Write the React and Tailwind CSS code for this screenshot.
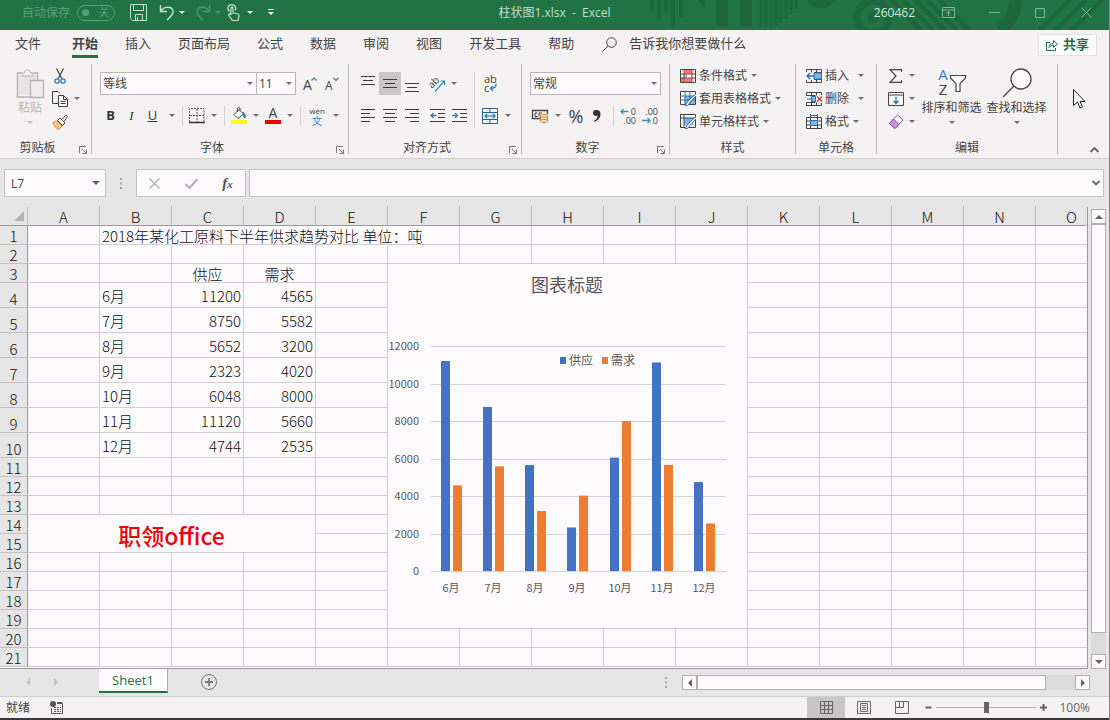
import React, { useState } from 'react';
import clsx from 'clsx';

const columns = 'ABCDEFGHIJKLMNO'.split('');

const monthly = [
  { month: '6月', supply: 11200, demand: 4565 },
  { month: '7月', supply: 8750, demand: 5582 },
  { month: '8月', supply: 5652, demand: 3200 },
  { month: '9月', supply: 2323, demand: 4020 },
  { month: '10月', supply: 6048, demand: 8000 },
  { month: '11月', supply: 11120, demand: 5660 },
  { month: '12月', supply: 4744, demand: 2535 }
];

const ribbonTabs = ['文件', '开始', '插入', '页面布局', '公式', '数据', '审阅', '视图', '开发工具', '帮助'];

/* ---------- icons ---------- */

function Icon({ w = 16, h = 16, className, children }) {
  return (
    <svg width={w} height={h} viewBox={`0 0 ${w} ${h}`} fill="none" stroke="currentColor" className={clsx('shrink-0 overflow-visible', className)} aria-hidden="true">
      {children}
    </svg>
  );
}

function Caret({ className = 'text-[#6f6f6f]' }) {
  return (
    <Icon w={6} h={3} className={className}>
      <path d="M0 0h6L3 3z" fill="currentColor" stroke="none" />
    </Icon>
  );
}

const PasteIcon = () => (
  <Icon w={28} h={32} className="text-[#b4b2b3]">
    <path d="M6 5H1.500v24H14" strokeWidth="1.500" />
    <path d="M17 5h4.500v7" strokeWidth="1.500" />
    <path d="M3 7h17v6h-6v14H3z" fill="#e6e4e5" stroke="none" />
    <path d="M6 8V5h2.500c0-4 6-4 6 0H17v3z" fill="#f5f2f3" />
    <path d="M14.500 12.500h13v17h-13z" fill="#efedee" strokeWidth="1.300" />
  </Icon>
);

const CutIcon = () => (
  <Icon w={12} h={16}>
    <path d="M2.500 0.500 8 11M9.500 0.500 4 11" stroke="#444" strokeWidth="1.200" />
    <circle cx="3" cy="13" r="2.200" stroke="#2f80c0" strokeWidth="1.300" />
    <circle cx="9" cy="13" r="2.200" stroke="#2f80c0" strokeWidth="1.300" />
  </Icon>
);

const CopyIcon = () => (
  <Icon className="text-[#3c3c3c]">
    <path d="M6 12.500H0.500v-12H6l2 2" />
    <path d="M6.500 4.500h5l4 4v7h-9z" fill="#fff" />
    <path d="M11.500 4.500v4h4M8.500 10.500h5M8.500 12.500h5" />
  </Icon>
);

const PainterIcon = () => (
  <Icon>
    <path d="M1 8.500 5 7l5 5-3 3.500c-2-.5-5-3-6-7z" fill="#fbd9b8" stroke="#e07b28" />
    <path d="M4 11l2-1M5.500 13l2-1.500" stroke="#e07b28" />
    <path d="M5.500 6.500 8 4l5 5-2.500 2.500z" fill="#fff" stroke="#444" />
    <path d="M10 5.500 14 1l1.500 1.500L12 7.500" fill="#fff" stroke="#444" />
  </Icon>
);

const Launcher = () => (
  <Icon w={8} h={8} className="text-[#777]">
    <path d="M7 0.500H0.500V7M3 3l4 4M7.500 3.500v4h-4" />
  </Icon>
);

const BordersIcon = () => (
  <Icon className="text-[#555]">
    <path d="M0.500 14V0.500h14.500V14M8 1v13M1 7.500h14" strokeDasharray="2 1" />
    <path d="M0 14.500h16" stroke="#333" strokeWidth="1.500" />
  </Icon>
);

const FillIcon = () => (
  <Icon w={16} h={18}>
    <path d="M3 7.500 8 2.500l4.500 4.500L7 11.500z" fill="#fff" stroke="#444" />
    <path d="M6.500 5V1.500c0-1.500 2.500-1.500 2.500 0V4" stroke="#444" />
    <path d="M12 5.500c2 1 2.500 3 2 5.500-1-.5-1.500-3-2-5.500z" fill="#2b6cb0" stroke="#2b6cb0" />
    <path d="M0 13h16v4H0z" fill="#ffff00" stroke="none" />
  </Icon>
);

const FontColorIcon = () => (
  <Icon w={16} h={18}>
    <text x="8" y="11" textAnchor="middle" fontSize="14" fill="#444" stroke="none">A</text>
    <path d="M0 13h16v4H0z" fill="#e60000" stroke="none" />
  </Icon>
);

function FontSizeIcon({ bigger }) {
  return (
    <Icon w={13} h={16}>
      <text x="0" y="14" fontSize={bigger ? 14 : 12} fill="#444" stroke="none">A</text>
      <path d={bigger ? 'M8.500 4.500 11 2l2.500 2.500' : 'M8.500 2 11 4.500 13.500 2'} stroke="#2f7fc4" strokeWidth="1.200" />
    </Icon>
  );
}

const linesFor = {
  top: ['M0 3.500h14', 'M2 7.500h10', 'M0 11.500h14'],
  middle: ['M0 6.500h14', 'M2 10.500h10', 'M0 14.500h14'],
  bottom: ['M0 10.500h14', 'M2 14.500h10', 'M0 18.500h14'],
  left: ['M0 4.500h14', 'M0 8.500h9', 'M0 12.500h14', 'M0 16.500h9'],
  center: ['M0 4.500h14', 'M2 8.500h10', 'M0 12.500h14', 'M2 16.500h10'],
  right: ['M0 4.500h14', 'M5 8.500h9', 'M0 12.500h14', 'M5 16.500h9'],
  indent: ['M0 4.500h15', 'M8 8.500h7', 'M8 12.500h7', 'M0 16.500h15']
};

function Lines({ kind, arrow }) {
  return (
    <Icon w={kind === 'indent' ? 15 : 14} h={22} className="text-[#3c3c3c]">
      {linesFor[kind].map((d) => <path key={d} d={d} />)}
      {arrow === 'out' && <path d="M6.500 10.500H1M3.500 8 1 10.500 3.500 13" stroke="#2f7fc4" strokeWidth="1.300" />}
      {arrow === 'in' && <path d="M0 10.500h5.500M3 8l2.500 2.500L3 13" stroke="#2f7fc4" strokeWidth="1.300" />}
    </Icon>
  );
}

const OrientationIcon = () => (
  <Icon w={18} h={18}>
    <text x="0" y="11" fontSize="10" fill="#444" stroke="none" transform="rotate(-45 5 9)">ab</text>
    <path d="M6 16.500 15.500 6M11.500 6h4v4" stroke="#3a8a9c" strokeWidth="1.200" />
  </Icon>
);

const WrapIcon = () => (
  <Icon w={14} h={18}>
    <text x="1" y="8" fontSize="11" fill="#444" stroke="none">ab</text>
    <text x="1" y="17" fontSize="11" fill="#444" stroke="none">c</text>
    <path d="M13 8.500v1c0 3-2 4-5.500 4M10 11l-2.500 2.500L10 16" stroke="#2f7fc4" strokeWidth="1.300" />
  </Icon>
);

const MergeIcon = () => (
  <Icon>
    <path d="M0.500 0.500h15v15h-15zM0.500 4.500h15M0.500 11.500h15M8 0.500v4M8 11.500v4" stroke="#2b5f94" />
    <path d="M1 5h14v6H1z" fill="#e3f1fb" stroke="none" />
    <path d="M3 8h10M5 6 3 8l2 2M11 6l2 2-2 2" stroke="#2073b8" strokeWidth="1.200" />
  </Icon>
);

const AccountingIcon = () => (
  <Icon w={17} h={14}>
    <path d="M8 9.500H0.500v-8h15V5" stroke="#444" strokeWidth="1.300" />
    <path d="M5.500 4H3v3.500h2.500M7 7.500V4h3" stroke="#444" />
    <path d="M8.500 6.500v5.500c0 2 7 2 7 0V6.500c0-1.500-7-1.500-7 0z" fill="#fde3cc" stroke="#e07b28" />
    <path d="M8.500 7c0 1.500 7 1.500 7 0M8.500 9.500c0 1.500 7 1.500 7 0" stroke="#e07b28" />
  </Icon>
);

function DecimalIcon({ more }) {
  return (
    <Icon w={16} h={18}>
      <text x="16" y="8" textAnchor="end" fontSize="9" fill="#444" stroke="none">{more ? '0' : '.00'}</text>
      <text x="16" y="17" textAnchor="end" fontSize="9" fill="#444" stroke="none">{more ? '.00' : '0'}</text>
      {more
        ? <path d="M8.500 4.500H1M3.500 2 1 4.500 3.500 7" stroke="#3a8fb5" strokeWidth="1.300" />
        : <path d="M0 13.500h8M5.500 11l2.500 2.500L5.500 16" stroke="#3a8fb5" strokeWidth="1.300" />}
    </Icon>
  );
}

const ConditionalIcon = () => (
  <Icon h={14}>
    <path d="M0.500 0.500h15v13h-15z" fill="#fff" stroke="#444" />
    <path d="M4 1h8v4H4zM1 9h6v4H1zM7 9h5v4H7z" fill="#f47c7c" stroke="none" />
    <path d="M4 5h3v4H4z" fill="#7db8e8" stroke="none" />
    <path d="M4 0.500v13M12 0.500v13M4 5h8M4 9h8" stroke="#c03a3a" />
    <path d="M0.500 5H4M0.500 9H4M12 5h3.500M12 9h3.500" stroke="#444" />
  </Icon>
);

const TableFormatIcon = () => (
  <Icon h={15}>
    <path d="M0.500 0.500h15v13h-15z" fill="#fff" stroke="#444" />
    <path d="M5 5h10v8H5z" fill="#78b8ec" stroke="none" />
    <path d="M5 0.500v13M10 0.500v13M0.500 5h15M0.500 9h15" stroke="#31679b" />
    <path d="M15.500 3 8 10l-3 4.500c2 .3 4-.5 4.500-2.500L16 5" fill="#fff" stroke="#31679b" />
  </Icon>
);

const CellStyleIcon = () => (
  <Icon h={15}>
    <path d="M0.500 0.500h15v13h-15z" fill="#fff" stroke="#444" />
    <path d="M4 4h9v7H4z" fill="#78b8ec" stroke="none" />
    <path d="M4 0.500v13M0.500 4h15" stroke="#444" />
    <path d="M15.500 3 8 10l-3 4.500c2 .3 4-.5 4.500-2.500L16 5" fill="#fff" stroke="#31679b" />
  </Icon>
);

const InsertCellsIcon = () => (
  <Icon h={14}>
    <path d="M0.500 3V0.500h15V3M0.500 11v2.500h15V11M5.500 0.500v3M10.500 0.500V13.500M5.500 11v2.500M15.500 3v8M8 3.500h7.500M8 10.500h7.500" stroke="#444" />
    <path d="M8 4h7.500v6H8z" fill="#78b8ec" stroke="#2073b8" />
    <path d="M8 7H1M4 4 1 7l3 3" stroke="#2073b8" strokeWidth="1.300" />
  </Icon>
);

const DeleteCellsIcon = () => (
  <Icon h={14}>
    <path d="M0.500 0.500h15V3M0.500 0.500v3h9M5.500 0.500v3M10.500 0.500v3M0.500 13.500h15V11M0.500 13.500v-3h9M5.500 10.500v3M10.500 10.500v3" stroke="#444" />
    <path d="M1 7h4M5.500 4.500h4v5h-4z" fill="#78b8ec" stroke="#2073b8" />
    <path d="m11 4.500 5 5M16 4.500l-5 5" stroke="#d83b3b" strokeWidth="1.300" />
  </Icon>
);

const FormatCellsIcon = () => (
  <Icon h={15}>
    <path d="M0.500 3.500h15v11h-15z" fill="#fff" stroke="#444" />
    <path d="M4.500 3v11.500M11.500 3v11.500M0.500 7h15M0.500 11h15" stroke="#444" />
    <path d="M4.500 6.500h7v5h-7z" fill="#78b8ec" stroke="#2073b8" />
    <path d="M4 1.500h8M4.500 0v3M11.500 0v3" stroke="#2073b8" />
  </Icon>
);

const SumIcon = () => (
  <Icon w={14} h={14}>
    <path d="M12.500 3V0.700H1L7 7l-6 6.300h11.500V11" stroke="#444" strokeWidth="1.200" />
  </Icon>
);

const FillDownIcon = () => (
  <Icon h={14}>
    <path d="M0.500 0.500h15v13h-15zM0.500 3h15" fill="#fff" stroke="#444" />
    <path d="M8 4.500v7M5.500 9 8 11.500 10.500 9" stroke="#2073b8" strokeWidth="1.300" />
  </Icon>
);

const ClearIcon = () => (
  <Icon h={15}>
    <path d="M9.500 1 15 6l-8 8.500L1.500 9.500z" fill="#fff" stroke="#8a4f9e" />
    <path d="M5.500 5 11 10.500 7 14.500 1.500 9.500z" fill="#c98fd8" stroke="#8a4f9e" />
  </Icon>
);

const SortFilterIcon = () => (
  <Icon w={30} h={28}>
    <text x="6" y="12" textAnchor="middle" fontSize="15" fill="#2f7fc4" stroke="none">A</text>
    <text x="6" y="27" textAnchor="middle" fontSize="15" fill="#444" stroke="none">Z</text>
    <path d="M13.500 7.500h15V10L23 15.500v8h-4v-8L13.500 10z" fill="#fff" stroke="#444" strokeWidth="1.200" />
  </Icon>
);

const FindIcon = () => (
  <Icon w={30} h={30}>
    <circle cx="19" cy="11" r="10" fill="#fdfbfd" stroke="#444" strokeWidth="1.300" />
    <path d="M12 18 1 29" stroke="#444" strokeWidth="1.300" />
  </Icon>
);

/* ---------- title bar ---------- */

function TitlePattern() {
  return (
    <svg className="absolute right-0 top-0" width="460" height="30" viewBox="0 0 460 30" fill="none" stroke="#1d673d" aria-hidden="true">
      <path d="M3 0v12M10 0v20M17 0v12M24 0v27M32 0v17" strokeWidth="4" />
      <path d="M49 0h7v9z" fill="#1d673d" stroke="none" />
      <path d="M67 0h12v27h-6l-6-4zM91 0h12v27H91z" fill="#1d673d" stroke="none" />
      <path d="M112 0v27M117 0v27M122 0v27M127 0v26M132 0v23M137 0v19M142 0v14M147 0v9" strokeWidth="3" />
      <path d="M159 0c3 11 23 11 26 0z" fill="#1d673d" stroke="none" />
      <circle cx="224" cy="17" r="16" strokeWidth="7" />
      <circle cx="224" cy="17" r="6" fill="#1d673d" stroke="none" />
      <path d="M242 0l30 30M254 0l30 30M266 0l30 30M278 0l30 30M290 0l30 30" strokeWidth="5" />
      <path d="M366 0c1 12-5 23-16 30" strokeWidth="13" />
      <path d="M391 30l30-30M407 30l30-30M423 30l30-30" strokeWidth="5" />
    </svg>
  );
}

function TitleBar() {
  const [autoSave, setAutoSave] = useState(false);
  return (
    <header className="relative grid h-[30px] shrink-0 grid-cols-[1fr_auto_1fr] items-center bg-[#217346] pb-[5px] text-xs text-[#bfe0cc]">
      <TitlePattern />
      <div className="relative flex items-center pl-[22px]">
        <label className="flex items-center gap-[7px] text-[#5c9d79]">
          自动保存
          <input type="checkbox" checked={autoSave} onChange={(e) => setAutoSave(e.target.checked)} className="sr-only" />
          <span className="flex h-4 w-[38px] items-center justify-between rounded-full border border-[#5c9d79] pl-1 pr-[5px] text-[10px]">
            <span className="size-[7px] rounded-full bg-[#5c9d79]" />
            {autoSave ? '开' : '关'}
          </span>
        </label>
        <button type="button" aria-label="保存" className="ml-[15px]">
          <Icon w={17} h={17}>
            <path d="M0.500 0.500h16v16h-14l-2-2zM3.500 0.500v6h10v-6M5.500 16.500v-6h7v6M7.500 13v3" />
          </Icon>
        </button>
        <button type="button" aria-label="撤消" className="ml-[12px] flex items-center gap-1">
          <Icon w={16} h={17}>
            <path d="M1.500 1v6.500H8M1.500 7.500C5 2 13 2 14 7c.6 3.500-2 5-6 9" strokeWidth="1.400" />
          </Icon>
          <Caret className="text-white" />
        </button>
        <button type="button" aria-label="恢复" className="ml-[10px] flex items-center gap-1 text-[#4f9470]">
          <Icon w={16} h={17}>
            <path d="M14.500 1v6.500H8M14.500 7.500C11 2 3 2 2 7c-.6 3.500 2 5 6 9" strokeWidth="1.400" />
          </Icon>
          <Caret className="text-[#4f9470]" />
        </button>
        <button type="button" aria-label="触摸/鼠标模式" className="ml-[6px] flex items-center gap-[7px]">
          <Icon w={13} h={17}>
            <path d="M3 7.500C-1 5 1 .7 4.500 .7S10 4 8 6.500" strokeWidth="1.200" />
            <path d="M4 11V4c0-1.500 2-1.500 2 0v5l5 1c1 .3 1 1 1 2l-1 4.500H5.500L1.500 11c0-1.500 1.500-1.300 2.500 0" strokeWidth="1.200" />
          </Icon>
          <Caret className="text-white" />
        </button>
        <button type="button" aria-label="自定义快速访问工具栏" className="ml-[15px]">
          <Icon w={6} h={7} className="text-white">
            <path d="M0 0.500h6" />
            <path d="M0 3h6L3 6z" fill="currentColor" stroke="none" />
          </Icon>
        </button>
      </div>
      <h1 className="relative whitespace-pre">柱状图1.xlsx  -  Excel</h1>
      <div className="relative flex items-center justify-end text-[#7fb697]">
        <span className="mr-[10px] text-[#cfe8d9]">260462</span>
        <button type="button" aria-label="功能区显示选项" className="flex w-[46px] justify-center">
          <Icon w={13} h={11}>
            <path d="M0.500 0.500h12v10h-12zM0.500 3h12M6.500 9V5M4.500 6.500l2-2 2 2" />
          </Icon>
        </button>
        <button type="button" aria-label="最小化" className="flex w-[46px] justify-center">
          <Icon w={11} h={11}><path d="M0 5.500h11" /></Icon>
        </button>
        <button type="button" aria-label="最大化" className="flex w-[46px] justify-center">
          <Icon w={10} h={10}><path d="M0.500 0.500h9v9h-9z" /></Icon>
        </button>
        <button type="button" aria-label="关闭" className="flex w-[46px] justify-center">
          <Icon w={11} h={11}><path d="M0.500 0.500l10 10M10.500 0.500l-10 10" /></Icon>
        </button>
      </div>
    </header>
  );
}

/* ---------- ribbon ---------- */

function RibbonTabs() {
  return (
    <nav className="flex h-7 shrink-0 items-center pl-[15px] pr-3 text-[13px]">
      <div className="flex items-center gap-[27px]">
        {ribbonTabs.map((tab) => (
          <button
            key={tab}
            type="button"
            className={clsx(
              'h-7 border-y-[3px] border-transparent whitespace-nowrap',
              tab === '开始' && 'border-b-[#217346] font-bold text-[#444]',
              tab === '文件' && 'mr-1'
            )}
          >
            {tab}
          </button>
        ))}
      </div>
      <button type="button" className="ml-[28px] flex items-center gap-3 whitespace-nowrap">
        <Icon w={15} h={15}>
          <circle cx="9.500" cy="5.500" r="4.800" />
          <path d="M6 9 0.500 14.500" />
        </Icon>
        告诉我你想要做什么
      </button>
      <button type="button" className="mt-[2px] ml-auto flex h-[22px] items-center gap-[5px] border border-[#e4e1e3] bg-[#fdfbfd] px-[7px] font-bold whitespace-nowrap text-[#217346]">
        <Icon w={12} h={12}>
          <path d="M4 3.500H0.500v8h9V9" />
          <path d="M3 8.500C3.500 5.500 5 4 7.500 4V1.500l4 3.500-4 3.500V6C5.500 6 4 7 3 8.500z" />
        </Icon>
        共享
      </button>
    </nav>
  );
}

function Group({ label, launcher, className, children }) {
  return (
    <section className={clsx('flex shrink-0 flex-col border-r border-[#b9b6b8]', className)}>
      <div className="flex-1">{children}</div>
      <div className="flex h-3 items-center text-xs leading-4">
        <span className="flex-1 text-center">{label}</span>
        {launcher && (
          <button type="button" aria-label={`${label}设置`} className="mt-1 flex w-4 justify-end pr-1">
            <Launcher />
          </button>
        )}
      </div>
    </section>
  );
}

function Tool({ label, className = 'w-[22px]', children }) {
  return (
    <button type="button" aria-label={label} title={label} className={clsx('flex h-[23px] shrink-0 items-center justify-center', className)}>
      {children}
    </button>
  );
}

function Drop({ label, className = 'w-[18px]' }) {
  return (
    <Tool label={`${label}选项`} className={className}>
      <Caret />
    </Tool>
  );
}

const Divider = ({ className = 'ml-px mr-[6px] h-5' }) => <span className={clsx('w-px shrink-0 bg-[#d5d2d4]', className)} />;

function Picker({ label, value, className }) {
  return (
    <div className={clsx('relative h-[23px]', className)}>
      <select aria-label={label} defaultValue={value} className="h-full w-full appearance-none border border-[#b9b6b8] bg-[#fdfbfd] pl-[2px] text-xs">
        <option>{value}</option>
      </select>
      <span className="pointer-events-none absolute top-[10px] right-1">
        <Caret />
      </span>
    </div>
  );
}

function MenuTool({ icon, text, gap = 'gap-1' }) {
  return (
    <button type="button" className={clsx('flex h-[23px] items-center whitespace-nowrap', gap)}>
      <span className="flex items-center gap-[3px]">
        {icon}
        {text}
      </span>
      <Caret />
    </button>
  );
}

function BigTool({ icon, text, caret, className }) {
  return (
    <button type="button" className={clsx('flex flex-col items-center pt-1 text-xs leading-4 whitespace-nowrap', className)}>
      <span className="flex h-8 items-start">{icon}</span>
      {text}
      <span className="pt-[5px]">
        <Caret className={caret} />
      </span>
    </button>
  );
}

function Ribbon() {
  return (
    <div className="flex h-[100px] shrink-0 pt-[6px] pb-1 text-xs">
      <Group label="剪贴板" launcher className="w-[92px]">
        <div className="flex">
          <BigTool icon={<PasteIcon />} text="粘贴" caret="text-[#c3c1c2]" className="w-[28px] ml-4 text-[#b4b2b3]" />
          <div className="ml-2 flex flex-col">
            <Tool label="剪切" className="w-4"><CutIcon /></Tool>
            <div className="flex">
              <Tool label="复制" className="w-4"><CopyIcon /></Tool>
              <Drop label="复制" />
            </div>
            <Tool label="格式刷" className="w-4"><PainterIcon /></Tool>
          </div>
        </div>
      </Group>

      <Group label="字体" launcher className="w-[257px]">
        <div className="flex flex-col gap-[9px] pt-2 pl-2">
          <div className="flex">
            <Picker label="字体" value="等线" className="w-[157px]" />
            <Picker label="字号" value="11" className="-ml-px w-[40px]" />
            <Tool label="增大字号" className="ml-[2px] w-[22px]"><FontSizeIcon bigger /></Tool>
            <Tool label="减小字号" className="w-[22px]"><FontSizeIcon /></Tool>
          </div>
          <div className="flex items-center text-[13px] text-[#333]">
            <Tool label="加粗" className="w-[21px] font-bold">B</Tool>
            <Tool label="倾斜" className="w-[21px] font-['Liberation_Serif',serif] italic">I</Tool>
            <Tool label="下划线" className="w-[21px] underline">U</Tool>
            <Drop label="下划线" />
            <Divider />
            <Tool label="边框" className="w-4"><BordersIcon /></Tool>
            <Drop label="边框" />
            <Divider />
            <Tool label="填充颜色" className="w-4"><FillIcon /></Tool>
            <Drop label="填充颜色" />
            <Tool label="字体颜色" className="w-4"><FontColorIcon /></Tool>
            <Drop label="字体颜色" />
            <Divider />
            <Tool label="拼音" className="w-5 flex-col text-[#444]">
              <span className="text-[8px] leading-[10px]">wén</span>
              <span className="text-[10px] leading-[10px] text-[#2f7fc4]">文</span>
            </Tool>
            <Drop label="拼音" />
          </div>
        </div>
      </Group>

      <Group label="对齐方式" launcher className="w-[173px]">
        <div className="flex pt-2 pl-2">
          <div className="flex flex-col gap-[9px]">
            <div className="flex">
              <Tool label="顶端对齐"><Lines kind="top" /></Tool>
              <Tool label="垂直居中" className="w-[22px] bg-[#c8c6c7]"><Lines kind="middle" /></Tool>
              <Tool label="底端对齐"><Lines kind="bottom" /></Tool>
              <Tool label="方向" className="ml-[5px] w-[19px]"><OrientationIcon /></Tool>
              <Drop label="方向" className="w-[14px]" />
            </div>
            <div className="flex">
              <Tool label="左对齐"><Lines kind="left" /></Tool>
              <Tool label="居中"><Lines kind="center" /></Tool>
              <Tool label="右对齐"><Lines kind="right" /></Tool>
              <Tool label="减少缩进量" className="ml-[3px] w-[22px]"><Lines kind="indent" arrow="out" /></Tool>
              <Tool label="增加缩进量"><Lines kind="indent" arrow="in" /></Tool>
            </div>
          </div>
          <Divider className="mr-1 ml-[4px] h-[56px]" />
          <div className="flex flex-col gap-[9px]">
            <Tool label="自动换行"><WrapIcon /></Tool>
            <div className="flex">
              <Tool label="合并后居中"><MergeIcon /></Tool>
              <Drop label="合并后居中" className="w-[14px]" />
            </div>
          </div>
        </div>
      </Group>

      <Group label="数字" launcher className="w-[148px]">
        <div className="flex flex-col gap-[9px] pt-2 pl-2">
          <Picker label="数字格式" value="常规" className="w-[131px]" />
          <div className="flex items-center">
            <Tool label="会计数字格式" className="w-5"><AccountingIcon /></Tool>
            <Drop label="会计数字格式" className="w-4" />
            <Tool label="百分比样式" className="w-5 text-lg text-[#444]">%</Tool>
            <Tool label="千位分隔样式">
              <Icon w={8} h={14}>
                <path d="M3.500 1a3 3 0 1 0 1 5.500C4.500 9 3.500 10.500 1 12l.5 1C5.500 11.500 7.500 8.500 7.500 5 7.500 2.500 6 1 3.500 1z" fill="#333" stroke="none" />
              </Icon>
            </Tool>
            <Divider className="mr-[3px] ml-[5px] h-5" />
            <Tool label="增加小数位数"><DecimalIcon more /></Tool>
            <Tool label="减少小数位数"><DecimalIcon /></Tool>
          </div>
        </div>
      </Group>

      <Group label="样式" className="w-[126px]">
        <div className="flex flex-col items-start pl-[10px]">
          <MenuTool icon={<ConditionalIcon />} text="条件格式" />
          <MenuTool icon={<TableFormatIcon />} text="套用表格格式" />
          <MenuTool icon={<CellStyleIcon />} text="单元格样式" />
        </div>
      </Group>

      <Group label="单元格" className="w-[81px]">
        <div className="flex flex-col items-start pl-[10px]">
          <MenuTool icon={<InsertCellsIcon />} text="插入" gap="gap-[9px]" />
          <MenuTool icon={<DeleteCellsIcon />} text="删除" gap="gap-[9px]" />
          <MenuTool icon={<FormatCellsIcon />} text="格式" />
        </div>
      </Group>

      <Group label="编辑" className="w-[181px]">
        <div className="flex pl-[10px]">
          <div className="flex flex-col">
            {[['自动求和', <SumIcon />], ['填充', <FillDownIcon />], ['清除', <ClearIcon />]].map(([label, icon]) => (
              <div key={label} className="flex">
                <Tool label={label} className="w-[18px]">{icon}</Tool>
                <Drop label={label} className="w-[14px]" />
              </div>
            ))}
          </div>
          <BigTool icon={<SortFilterIcon />} text="排序和筛选" className="w-[65px]" />
          <BigTool icon={<FindIcon />} text="查找和选择" className="w-[65px]" />
        </div>
      </Group>

      <div className="flex flex-1 items-end justify-end pr-[10px] pb-[1px]">
        <button type="button" aria-label="折叠功能区">
          <Icon w={9} h={6} className="text-[#666]"><path d="M0.500 5 4.500 1l4 4" strokeWidth="1.800" /></Icon>
        </button>
      </div>
    </div>
  );
}

/* ---------- formula bar ---------- */

const Dots = () => (
  <Icon w={2} h={11} className="text-[#a5a3a4]">
    <path d="M0 1h2M0 5.500h2M0 10h2" strokeWidth="2" />
  </Icon>
);

function FormulaBar() {
  return (
    <div className="flex shrink-0 items-center border-t border-[#cfd2d1] bg-[#e6e6e6] py-[10px] pr-[5px] pl-1">
      <div className="relative">
        <input aria-label="名称框" defaultValue="L7" className="h-7 w-[102px] border border-[#c3c1c2] bg-[#fdfbfd] pl-[6px] text-xs" />
        <span className="pointer-events-none absolute top-3 right-[6px]">
          <Icon w={8} h={4} className="text-[#666]"><path d="M0 0h8L4 4z" fill="currentColor" stroke="none" /></Icon>
        </span>
      </div>
      <span className="mx-[14px]"><Dots /></span>
      <div className="flex h-7 w-[110px] items-center justify-around border border-[#c3c1c2] bg-[#fdfbfd] text-[#b5b3b4]">
        <button type="button" aria-label="取消">
          <Icon w={11} h={11}><path d="M0.500 0.500l10 10M10.500 0.500l-10 10" strokeWidth="1.500" /></Icon>
        </button>
        <button type="button" aria-label="输入">
          <Icon w={13} h={11}><path d="M0.500 6 4.500 10l8-9" strokeWidth="2" /></Icon>
        </button>
        <button type="button" aria-label="插入函数" className="font-['Liberation_Serif',serif] text-[15px] leading-5 font-bold text-[#555] italic">
          f<span className="text-[11px]">x</span>
        </button>
      </div>
      <div className="relative ml-[3px] flex-1">
        <input aria-label="编辑栏" className="block h-7 w-full border border-[#c3c1c2] bg-[#fdfbfd] px-1 text-sm" />
        <button type="button" aria-label="展开编辑栏" className="absolute top-[11px] right-1">
          <Icon w={8} h={6} className="text-[#666]"><path d="M0.500 1 4 4.500 7.500 1" strokeWidth="1.800" /></Icon>
        </button>
      </div>
    </div>
  );
}

/* ---------- sheet ---------- */

const cell = 'border-r border-b border-[#d0ced0] p-0 px-[2px] pt-[2px]';

function Row({ n, tall, children }) {
  return (
    <tr className={tall ? 'h-[25px]' : 'h-[19px]'}>
      <th scope="row" className="border-r border-b border-r-[#9b9b9b] border-b-[#c3c1c2] bg-[#e6e6e6] p-0 pt-[2px] align-bottom font-light">
        {n}
      </th>
      {children}
    </tr>
  );
}

const blanks = (count) => Array.from({ length: count }, (_, i) => <td key={i} className={cell} />);

function Grid() {
  const total = columns.length;
  const plain = (n) => <Row key={n} n={n}>{blanks(total)}</Row>;

  return (
    <table className="w-px table-fixed border-separate border-spacing-0 font-['Noto_Sans_CJK_SC',sans-serif] text-[15px] leading-4 font-light text-[#111]">
      <colgroup>
        <col className="w-7" />
        {columns.map((c) => <col key={c} className="w-[72px]" />)}
      </colgroup>
      <thead>
        <tr className="h-[19px] bg-[#e6e6e6]">
          <th className="border-r border-b border-r-[#c3c1c2] border-b-[#9b9b9b] p-0">
            <button type="button" aria-label="全选" className="ml-auto mr-[3px] block">
              <Icon w={10} h={10} className="text-[#b5b3b4]"><path d="M10 0v10H0z" fill="currentColor" stroke="none" /></Icon>
            </button>
          </th>
          {columns.map((c) => (
            <th key={c} scope="col" className="border-r border-b border-r-[#b9b7b8] border-b-[#9b9b9b] p-0 pt-[2px] font-light">{c}</th>
          ))}
        </tr>
      </thead>
      <tbody>
        <Row n={1}>
          {blanks(1)}
          <td colSpan={5} className={clsx(cell, 'whitespace-nowrap')}>2018年某化工原料下半年供求趋势对比 单位：吨</td>
          {blanks(total - 6)}
        </Row>
        {plain(2)}
        <Row n={3}>
          {blanks(2)}
          <td className={clsx(cell, 'text-center')}>供应</td>
          <td className={clsx(cell, 'text-center')}>需求</td>
          {blanks(total - 4)}
        </Row>
        {monthly.map((m, i) => (
          <Row key={m.month} n={i + 4} tall>
            {blanks(1)}
            <td className={cell}>{m.month}</td>
            <td className={clsx(cell, 'text-right')}>{m.supply}</td>
            <td className={clsx(cell, 'text-right')}>{m.demand}</td>
            {blanks(total - 4)}
          </Row>
        ))}
        {[11, 12, 13].map(plain)}
        <Row n={14}>
          <td colSpan={4} rowSpan={2} className={clsx(cell, 'text-center text-[23px] leading-[30px] font-medium text-[#f00008]')}>职领office</td>
          {blanks(total - 4)}
        </Row>
        <Row n={15}>{blanks(total - 4)}</Row>
        {[16, 17, 18, 19, 20, 21].map(plain)}
      </tbody>
    </table>
  );
}

function Chart() {
  const base = 307;
  const left = 42;
  const step = 42.14;
  const y = (v) => base - (v / 12000) * 225;

  return (
    <svg
      role="img"
      aria-label="图表标题"
      width="359"
      height="364"
      viewBox="0 0 359 364"
      className="absolute top-[57px] left-[388px] bg-[#fdfbfd] font-['Noto_Sans_CJK_SC',sans-serif] text-[11px]"
      fill="#595959"
    >
      <text x="179" y="28" textAnchor="middle" fontSize="18">图表标题</text>
      {[0, 2000, 4000, 6000, 8000, 10000, 12000].map((v) => (
        <g key={v}>
          <path d={`M43 ${Math.round(y(v)) + 0.5}h295`} stroke="#d5d3d5" />
          <text x="31" y={y(v) + 4} textAnchor="end">{v}</text>
        </g>
      ))}
      {monthly.map((m, i) => {
        const x = Math.round(left + i * step);
        return (
          <g key={m.month}>
            <rect x={x + 11} y={y(m.supply)} width="9" height={base - y(m.supply)} fill="#4472c4" />
            <rect x={x + 23} y={y(m.demand)} width="9" height={base - y(m.demand)} fill="#ed7d31" />
            <text x={x + 21} y="328" textAnchor="middle">{m.month}</text>
          </g>
        );
      })}
      <rect x="172" y="93" width="6" height="7" fill="#4472c4" />
      <text x="181" y="101" fontSize="12">供应</text>
      <rect x="214" y="93" width="6" height="7" fill="#ed7d31" />
      <text x="223" y="101" fontSize="12">需求</text>
    </svg>
  );
}

const scrollButton = 'flex size-[15px] shrink-0 items-center justify-center border border-[#b0aeaf] bg-[#fdfbfd] text-[#666]';

function Sheet() {
  return (
    <div className="flex min-h-0 flex-1 bg-[#e6e6e6]">
      <div className="relative min-w-0 flex-1 overflow-hidden border-r border-b border-[#9b9b9b] bg-[#fdfbfd]">
        <Grid />
        <Chart />
      </div>
      <div className="mr-[3px] ml-[3px] flex w-[15px] flex-col pt-[2px]">
        <button type="button" aria-label="向上滚动" className={scrollButton}>
          <Icon w={8} h={4}><path d="M0 4h8L4 0z" fill="currentColor" stroke="none" /></Icon>
        </button>
        <div className="flex flex-1 flex-col bg-[#dcdbdc]">
          <div className="basis-[409px] border border-[#b0aeaf] bg-[#fdfbfd]" />
        </div>
        <button type="button" aria-label="向下滚动" className={scrollButton}>
          <Icon w={8} h={4}><path d="M0 0h8L4 4z" fill="currentColor" stroke="none" /></Icon>
        </button>
      </div>
    </div>
  );
}

function SheetTabs() {
  return (
    <div className="flex h-[27px] shrink-0 items-start bg-[#e6e6e6] pr-[19px]">
      <div className="flex h-[26px] w-[99px] items-center gap-6 pl-[25px] text-[#c3c1c2]">
        <button type="button" aria-label="上一个工作表">
          <Icon w={5} h={8}><path d="M5 0v8L1 4z" fill="currentColor" stroke="none" /></Icon>
        </button>
        <button type="button" aria-label="下一个工作表">
          <Icon w={5} h={8}><path d="M0 0v8l4-4z" fill="currentColor" stroke="none" /></Icon>
        </button>
      </div>
      <button type="button" className="h-6 w-[69px] border-r border-b-2 border-r-[#b0aeaf] border-b-[#217346] bg-[#fdfbfd] text-[13px] leading-5 text-[#217346]">Sheet1</button>
      <button type="button" aria-label="新工作表" className="mt-[5px] ml-[33px]">
        <Icon w={16} h={16} className="text-[#777]">
          <circle cx="8" cy="8" r="7.500" />
          <path d="M4 8h8M8 4v8" strokeWidth="1.800" />
        </Icon>
      </button>
      <div className="ml-auto flex h-[27px] items-center">
        <Dots />
        <div className="ml-[15px] flex w-[408px] bg-[#dcdbdc]">
          <button type="button" aria-label="向左滚动" className={scrollButton}>
            <Icon w={4} h={8}><path d="M4 0v8L0 4z" fill="currentColor" stroke="none" /></Icon>
          </button>
          <div className="w-[349px] border border-[#b0aeaf] bg-[#fdfbfd]" />
          <button type="button" aria-label="向右滚动" className={clsx(scrollButton, 'ml-auto')}>
            <Icon w={4} h={8}><path d="M0 0v8l4-4z" fill="currentColor" stroke="none" /></Icon>
          </button>
        </div>
      </div>
    </div>
  );
}

function StatusBar() {
  const [zoom, setZoom] = useState(100);
  return (
    <footer className="flex h-6 shrink-0 items-center border-t border-b-2 border-t-[#cfcdce] border-b-[#3a3838] pr-[19px] pl-[6px] text-xs">
      <span>就绪</span>
      <button type="button" aria-label="宏录制" className="ml-5">
        <Icon w={13} h={13} className="text-[#555]">
          <path d="M7 2.500h5.500v10h-11V7M7 1.500h5.500" />
          <circle cx="3" cy="3" r="3" fill="currentColor" stroke="none" />
          <path d="M4 6.500h7M4 8.500h7M4 10.500h7" strokeDasharray="2 1" />
        </Icon>
      </button>
      <div className="ml-auto flex h-full items-center text-[#666]">
        <button type="button" aria-label="普通" className="flex h-full w-[38px] items-center justify-center bg-[#c8c6c7]">
          <Icon w={13} h={13}><path d="M0.500 0.500h12v12h-12zM4.500 0.500v12M8.500 0.500v12M0.500 4.500h12M0.500 8.500h12" /></Icon>
        </button>
        <button type="button" aria-label="页面布局" className="flex h-full w-[38px] items-center justify-center">
          <Icon w={14} h={13}><path d="M0.500 0.500h13v12h-13zM3.500 2.500h7v8h-7zM5 4.500h4M5 6.500h4M5 8.500h4" /></Icon>
        </button>
        <button type="button" aria-label="分页预览" className="flex h-full w-[38px] items-center justify-center">
          <Icon w={14} h={13}><path d="M0.500 0.500h13v12h-13zM4.500 0.500v6M8.500 0.500v6M0.500 6.500h8" /></Icon>
        </button>
        <button type="button" aria-label="缩小" className="ml-1" onClick={() => setZoom(Math.max(10, zoom - 10))}>
          <Icon w={7} h={7}><path d="M0.500 3.500h6" strokeWidth="2" /></Icon>
        </button>
        <input
          type="range"
          aria-label="显示比例"
          min="10"
          max="190"
          value={zoom}
          onChange={(e) => setZoom(Number(e.target.value))}
          className="mx-[4px] h-3 w-[100px] appearance-none bg-transparent [&::-webkit-slider-runnable-track]:h-px [&::-webkit-slider-runnable-track]:bg-[#b0aeaf] [&::-webkit-slider-thumb]:-mt-[5px] [&::-webkit-slider-thumb]:h-[11px] [&::-webkit-slider-thumb]:w-[5px] [&::-webkit-slider-thumb]:appearance-none [&::-webkit-slider-thumb]:bg-[#666]"
        />
        <button type="button" aria-label="放大" onClick={() => setZoom(Math.min(190, zoom + 10))}>
          <Icon w={7} h={7}><path d="M0 3.500h7M3.500 0v7" strokeWidth="2" /></Icon>
        </button>
        <span className="ml-3">{zoom}%</span>
      </div>
    </footer>
  );
}

function Pointer() {
  return (
    <svg className="pointer-events-none absolute top-[89px] left-[1073px]" width="13" height="20" viewBox="0 0 13 20" aria-hidden="true">
      <path d="M0.500 0.500v16l4-3.500 2.500 6 2.500-1-2.500-5.500h5z" fill="#fff" stroke="#222" />
    </svg>
  );
}

function App() {
  return (
    <div className="relative flex h-screen flex-col overflow-hidden border-r border-[#8a8889] bg-[#f5f2f3] font-['Open_Sans','Noto_Sans_CJK_SC',sans-serif] text-[#444]">
      <TitleBar />
      <RibbonTabs />
      <Ribbon />
      <FormulaBar />
      <Sheet />
      <SheetTabs />
      <StatusBar />
      <Pointer />
    </div>
  );
}

export default App;
